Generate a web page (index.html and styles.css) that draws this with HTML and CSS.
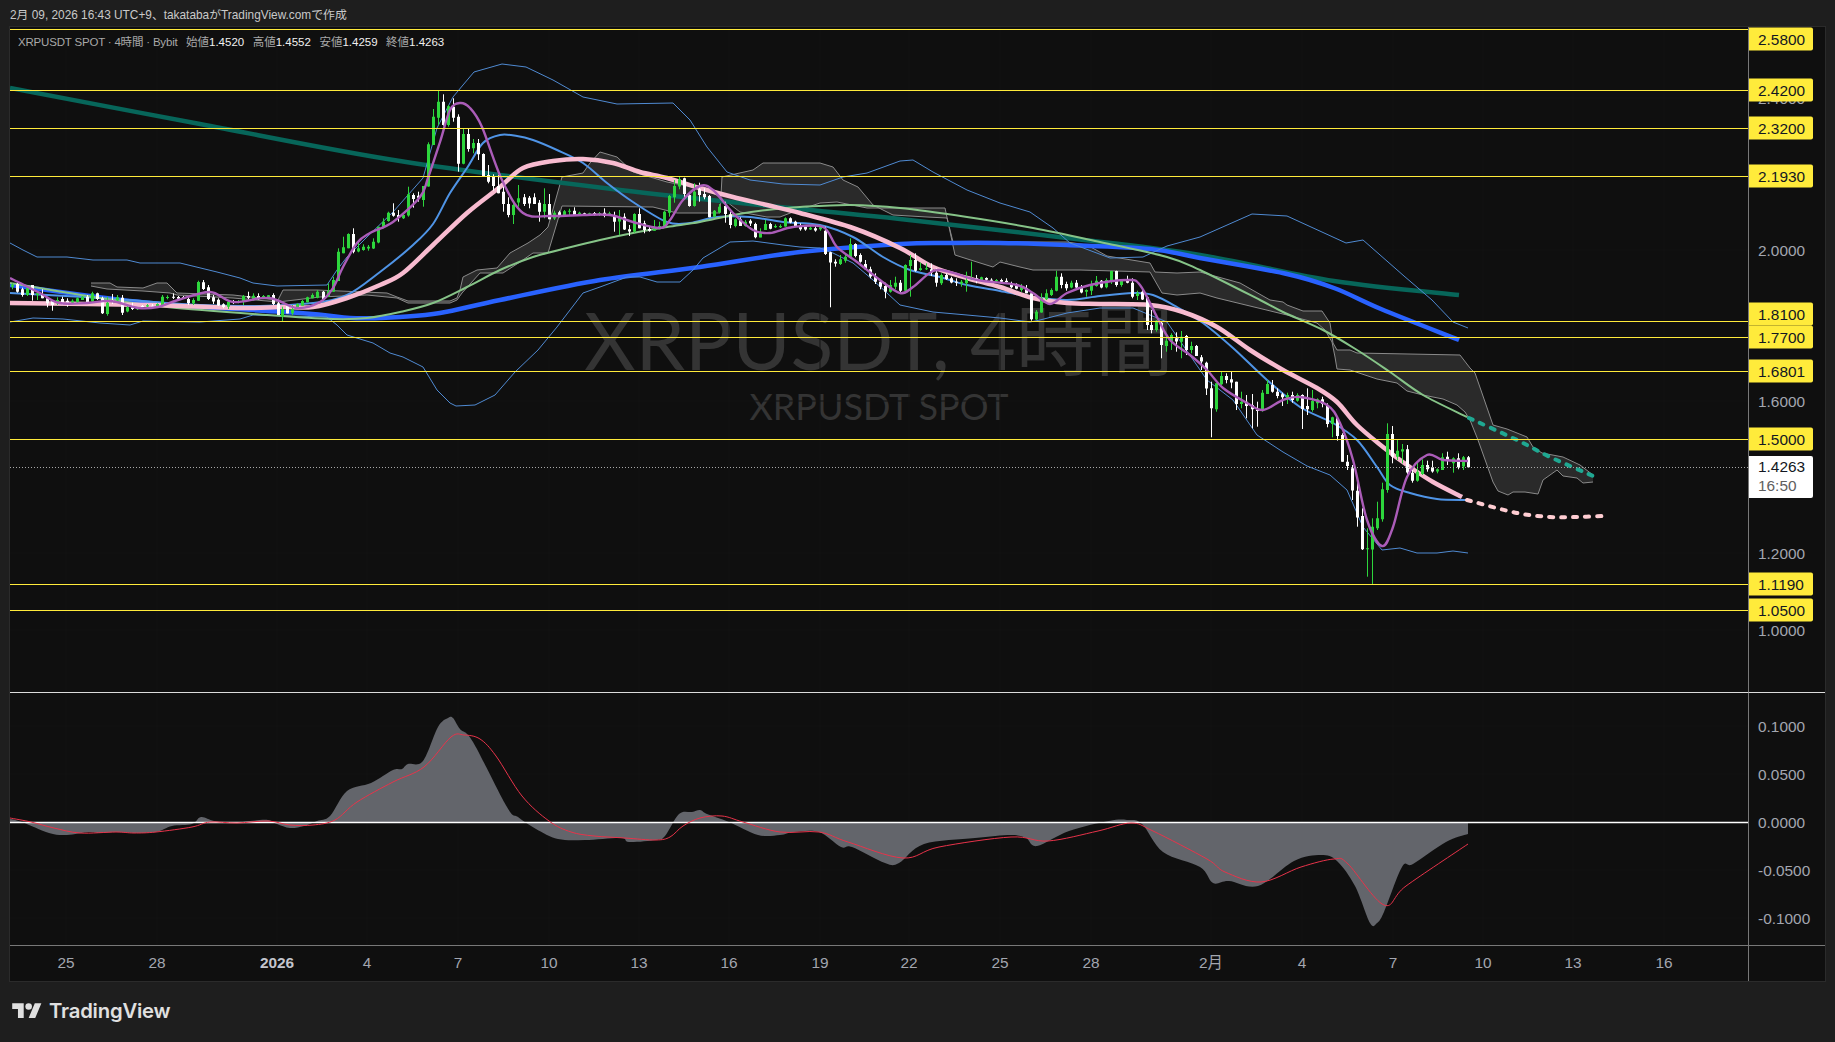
FILE: index.html
```html
<!DOCTYPE html>
<html lang="ja">
<head>
    <meta charset="UTF-8">
    <meta name="viewport" content="width=device-width, initial-scale=1.0">
    <title>XRPUSDT SPOT, 4時間 | TradingView</title>
    <link rel="stylesheet" href="styles.css">
</head>
<body>
    <div class="snapshot-bar">2月 09, 2026 16:43 UTC+9、takatabaがTradingView.comで作成</div>

    <div class="chart-frame">
        <div class="pane main-pane">
            <div class="watermark">
                <div class="watermark-title">XRPUSDT, 4時間</div>
                <div class="watermark-sub">XRPUSDT SPOT</div>
            </div>
            <svg id="priceChart" class="pane-svg" viewBox="10 27 1738 666"></svg>
            <div class="legend">
                <span class="legend-symbol">XRPUSDT SPOT · 4時間 · Bybit</span>
                <span>始値<b>1.4520</b></span>
                <span>高値<b>1.4552</b></span>
                <span>安値<b>1.4259</b></span>
                <span>終値<b>1.4263</b></span>
            </div>
        </div>

        <div class="price-scale main-scale">
            <span class="tick" style="top:71px">2.4000</span>
            <span class="tick" style="top:223px">2.0000</span>
            <span class="tick" style="top:374px">1.6000</span>
            <span class="tick" style="top:526px">1.2000</span>
            <span class="tick" style="top:603px">1.0000</span>
            <span class="level" style="top:11.5px">2.5800</span>
            <span class="level" style="top:63px">2.4200</span>
            <span class="level" style="top:101px">2.3200</span>
            <span class="level" style="top:149px">2.1930</span>
            <span class="level" style="top:287px">1.8100</span>
            <span class="level" style="top:310px">1.7700</span>
            <span class="level" style="top:344px">1.6801</span>
            <span class="level" style="top:412px">1.5000</span>
            <span class="level" style="top:557px">1.1190</span>
            <span class="level" style="top:583px">1.0500</span>
            <span class="last-price" style="top:429px">1.4263<small>16:50</small></span>
        </div>

        <div class="pane macd-pane">
            <svg id="macdChart" class="pane-svg" viewBox="10 694 1738 253"></svg>
        </div>

        <div class="price-scale macd-scale">
            <span class="tick" style="top:33px">0.1000</span>
            <span class="tick" style="top:81px">0.0500</span>
            <span class="tick" style="top:129px">0.0000</span>
            <span class="tick" style="top:177px">-0.0500</span>
            <span class="tick" style="top:225px">-0.1000</span>
        </div>

        <div class="time-axis">
            <span style="left:56px">25</span>
            <span style="left:147px">28</span>
            <span class="year" style="left:267px">2026</span>
            <span style="left:357px">4</span>
            <span style="left:448px">7</span>
            <span style="left:539px">10</span>
            <span style="left:629px">13</span>
            <span style="left:719px">16</span>
            <span style="left:810px">19</span>
            <span style="left:899px">22</span>
            <span style="left:990px">25</span>
            <span style="left:1081px">28</span>
            <span style="left:1201px">2月</span>
            <span style="left:1292px">4</span>
            <span style="left:1383px">7</span>
            <span style="left:1473px">10</span>
            <span style="left:1563px">13</span>
            <span style="left:1654px">16</span>
        </div>
        <div class="axis-corner"></div>
    </div>

    <footer class="brand">
        <svg class="brand-mark" viewBox="0 0 36 28" aria-hidden="true">
            <path d="M14 22H7V11H0V4h14v18zM28 22h-8l7.5-18h8L28 22z"></path>
            <circle cx="20" cy="8" r="4"></circle>
        </svg>
        <span class="brand-name">TradingView</span>
    </footer>

    <script src="chart.js"></script>
</body>
</html>
```

FILE: styles.css
```css
:root {
    --page-bg: #1e1e1e;
    --chart-bg: #0f0f0f;
    --frame: #2b2b2b;
    --axis-line: #787878;
    --tick-text: #a3a6af;
    --level: #ffeb3b;
}

* {
    margin: 0;
    padding: 0;
    box-sizing: border-box;
}

body {
    width: 1835px;
    height: 1042px;
    overflow: hidden;
    background-color: var(--page-bg);
    font-family: "Liberation Sans", "Noto Sans CJK JP", sans-serif;
}

.snapshot-bar {
    height: 26px;
    padding-left: 10px;
    line-height: 30px;
    font-size: 11.85px;
    color: #c9c9c9;
    white-space: nowrap;
}

.chart-frame {
    display: grid;
    grid-template-columns: 1738px 77px;
    grid-template-rows: 666px 253px 35px;
    width: 1817px;
    margin-left: 9px;
    border: 1px solid var(--frame);
    background-color: var(--chart-bg);
}

.pane {
    position: relative;
    overflow: hidden;
}

.main-pane,
.main-scale {
    border-bottom: 1px solid #dcdcdc;
}

.macd-pane,
.macd-scale {
    border-bottom: 1px solid var(--axis-line);
}

.pane-svg {
    display: block;
    position: absolute;
    top: 0;
    left: 0;
    width: 1738px;
}

.main-pane .pane-svg {
    height: 666px;
}

.macd-pane .pane-svg {
    height: 253px;
}

/* watermark sits behind the series */
.watermark {
    position: absolute;
    top: 268px;
    left: 0;
    width: 100%;
    text-align: center;
    color: #343434;
    font-family: Lato, "Noto Sans CJK JP", sans-serif;
    white-space: nowrap;
}

.watermark-title {
    font-size: 79px;
    line-height: 90px;
}

.watermark-sub {
    font-size: 36px;
    line-height: 42px;
}

.legend {
    position: absolute;
    top: 7px;
    left: 8px;
    display: flex;
    gap: 8.5px;
    font-size: 11.5px;
    line-height: 16px;
    color: #a8a8a8;
    white-space: nowrap;
}

.legend-symbol {
    letter-spacing: -0.19px;
}

.legend b {
    color: #f0f0f0;
    font-weight: normal;
}

.price-scale {
    position: relative;
    border-left: 1px solid var(--axis-line);
    font-size: 15.4px;
    overflow: hidden;
}

.tick,
.level,
.last-price {
    position: absolute;
    left: 0;
    padding-left: 9px;
    white-space: nowrap;
}

.tick {
    height: 23px;
    line-height: 23px;
    transform: translateY(-50%);
    color: var(--tick-text);
}

.level {
    width: 64px;
    height: 23px;
    line-height: 23px;
    transform: translateY(-50%);
    border-radius: 0 2px 2px 0;
    background-color: var(--level);
    color: #131722;
}

.last-price {
    width: 64px;
    height: 42px;
    padding-top: 1px;
    line-height: 19px;
    border-radius: 0 2px 2px 0;
    background-color: #fff;
    color: #131722;
}

.last-price small {
    display: block;
    font-size: inherit;
    color: #606060;
}

.time-axis {
    position: relative;
    font-size: 15.4px;
    color: var(--tick-text);
}

.time-axis span {
    position: absolute;
    top: 6px;
    line-height: 22px;
    transform: translateX(-50%);
    white-space: nowrap;
}

.time-axis .year {
    font-weight: bold;
    color: #c3c5cd;
}

.axis-corner {
    border-left: 1px solid var(--axis-line);
}

.brand {
    display: flex;
    align-items: center;
    gap: 7px;
    margin: 16px 0 0 12px;
    color: #e0e0e0;
}

.brand-mark {
    width: 30px;
    height: 23px;
    fill: currentColor;
}

.brand-name {
    font-family: Inter, "Liberation Sans", sans-serif;
    font-size: 20.3px;
    font-weight: 600;
    letter-spacing: -0.2px;
    line-height: 26px;
}
```

FILE: chart.js
```js
const SVG_NS = 'http://www.w3.org/2000/svg';

function pts(str) {
    return str.trim().split(/\s+/).map(p => p.split(',').map(Number));
}

function polyD(points) {
    return 'M' + points.map(p => p.join(' ')).join('L');
}

// Catmull-Rom through the points, so the averages don't look faceted
function smoothD(points) {
    let d = 'M' + points[0].join(' ');
    for (let i = 0; i < points.length - 1; i++) {
        const p0 = points[i - 1] || points[i];
        const p1 = points[i];
        const p2 = points[i + 1];
        const p3 = points[i + 2] || p2;
        const c1x = p1[0] + (p2[0] - p0[0]) / 6;
        const c1y = p1[1] + (p2[1] - p0[1]) / 6;
        const c2x = p2[0] - (p3[0] - p1[0]) / 6;
        const c2y = p2[1] - (p3[1] - p1[1]) / 6;
        d += `C${c1x.toFixed(1)} ${c1y.toFixed(1)} ${c2x.toFixed(1)} ${c2y.toFixed(1)} ${p2[0]} ${p2[1]}`;
    }
    return d;
}

function add(svg, d, attrs) {
    const el = document.createElementNS(SVG_NS, 'path');
    el.setAttribute('d', d);
    el.setAttribute('fill', 'none');
    el.setAttribute('stroke-linejoin', 'round');
    for (const key in attrs) el.setAttribute(key, attrs[key]);
    svg.appendChild(el);
    return el;
}

/* ---------- series data, page coordinates ---------- */

const spanA = pts(`91,283 110,283 117,287 143,288 157,283 167,283 177,293 233,295 278,300 283,290 317,290 387,293 397,297 408,301 450,301
    457,298 460,290 463,277 477,270 497,268 510,253 528,243 540,235 548,227 562,177 583,173 590,163 600,152 617,157 633,172 667,182 693,187
    713,193 727,202 740,212 767,217 780,217 793,212 820,203 837,202 867,208 900,208 945,208 955,255 977,262 993,267 1000,262 1020,267
    1033,270 1080,270 1150,272 1162,293 1177,295 1200,293 1217,298 1287,315 1317,323 1325,330 1332,342 1335,357 1337,369 1350,370 1377,379
    1397,383 1407,391 1423,395 1443,399 1457,405 1465,412 1470,420 1478,440 1493,482 1498,491 1508,495 1513,492 1525,492 1538,494 1543,480
    1550,475 1557,470 1563,476 1577,478 1583,483 1593,482`);

const spanB = pts(`91,286 107,289 143,291 170,293 177,295 233,298 278,302 320,297 367,295 397,298 408,303 450,303 457,300 462,293 480,273
    503,273 520,262 533,253 548,253 562,206 653,207 677,213 720,213 722,177 753,170 763,163 820,163 833,167 843,180 858,187 873,205 893,215
    927,217 947,218 953,242 1067,242 1087,245 1107,256 1150,263 1155,272 1177,273 1200,272 1240,283 1270,300 1283,302 1287,305 1303,311
    1322,311 1330,323 1333,343 1337,350 1350,350 1357,353 1460,355 1470,368 1475,373 1493,425 1507,429 1527,437 1533,447 1542,453 1563,457
    1580,465 1593,475`);

const bbUpper = pts(`10,243 23,250 37,257 67,257 93,260 127,260 140,263 180,263 217,272 240,278 253,283 277,286 327,285 337,270 347,257 367,237
    393,212 423,178 437,128 453,97 463,85 474,72 502,64 526,67 553,80 583,97 617,104 673,103 690,120 707,147 727,172 750,180 783,184 820,185
    843,177 867,173 900,161 913,160 933,172 967,190 1000,203 1030,212 1053,228 1070,243 1110,258 1143,257 1167,246 1200,237 1252,214 1287,216
    1346,243 1363,240 1404,276 1432,300 1453,322 1468,328`);

const bbLower = pts(`10,322 33,318 63,319 100,323 130,325 143,321 200,322 240,319 253,315 327,317 337,325 347,335 373,343 390,353 403,357
    423,367 437,390 450,403 456,406 475,405 495,395 515,372 538,350 557,327 583,293 600,287 627,277 640,277 657,282 680,282 693,270 703,258
    730,242 753,241 783,245 800,247 820,248 833,253 853,263 873,280 887,293 900,305 933,312 967,315 1000,318 1030,322 1040,320 1067,313 1100,308
    1133,308 1167,322 1207,380 1233,400 1257,435 1283,452 1307,466 1330,475 1347,490 1363,527 1382,550 1400,548 1417,553 1437,553 1453,551 1468,553`);

const slowGreen = pts(`10,88 200,124 400,161 620,190 800,209 900,219 1067,238 1200,255 1334,281 1459,295`);

const thickBlue = pts(`10,285 150,303 300,313 350,318 380,318 400,317 440,313 500,300 600,280 700,267 800,252 900,244 950,243 1000,243 1067,245
    1150,249 1200,258 1287,274 1334,288 1381,309 1459,340`);

const pink = pts(`10,303 150,305 240,308 280,307 313,307 347,298 380,285 403,273 433,245 467,213 500,187 523,168 553,161 583,159 613,163 640,172
    667,178 700,188 733,197 767,205 800,213 853,228 900,248 933,267 967,278 1000,287 1033,298 1067,303 1100,304 1150,305 1183,312 1217,327 1250,350
    1283,370 1317,388 1337,402 1357,425 1383,447 1407,465 1433,482 1462,497`);
const pinkDash = pts(`1467,500 1517,513 1550,517 1577,517 1603,516`);

const lightGreen = pts(`10,283 100,298 167,307 267,315 333,319 367,318 400,312 433,303 467,287 500,270 533,257 567,248 600,240 633,233 667,227
    700,222 733,215 767,210 800,207 850,205 900,208 967,217 1033,228 1100,242 1167,257 1200,270 1260,300 1283,312 1323,330 1357,350 1390,372 1423,395 1467,417`);
const tealDash = pts(`1469,418 1517,440 1550,457 1593,476`);

const midBlue = pts(`10,293 100,298 200,305 260,306 313,303 347,295 380,272 413,245 433,224 450,193 467,168 483,143 500,135 517,136 533,140 557,150
    583,163 607,183 633,202 667,222 690,223 717,217 750,217 783,222 820,225 853,237 883,257 910,270 940,277 967,285 1000,291 1033,297 1067,300 1100,296
    1133,293 1153,295 1177,307 1203,323 1233,348 1267,380 1300,407 1333,423 1357,440 1377,467 1390,485 1410,493 1437,499 1467,500`);

const purple = pts(`10,278 24,285 40,293 59,303 87,303 111,301 138,308 158,307 178,300 210,292 233,302 269,298 297,308 320,302 333,288 343,267
    357,243 370,233 393,222 420,197 428,178 440,142 450,110 460,103 470,108 482,127 502,180 523,213 550,216 583,215 610,215 633,222 660,228 670,220
    683,200 700,186 713,190 733,213 753,230 770,233 793,227 823,227 837,247 857,262 880,280 900,293 913,287 933,271 950,272 977,280 1017,285 1033,293
    1050,304 1067,293 1090,285 1127,280 1140,285 1157,317 1170,340 1190,355 1207,370 1223,388 1247,403 1263,410 1283,400 1300,397 1327,405 1340,423
    1353,460 1367,520 1382,546 1393,527 1407,477 1427,455 1443,460 1468,461`);

/* candles read off 3x crops: colour, wick top, body top, body bottom, wick bottom */
const candleRuns = [
    { x0: 11.7, y0: 250, rows: `g 100 104 110 118,w 98 102 125 128,w 113 118 135 140,g 110 113 135 138,w 105 105 135 152,g 125 130 135 150,
        w 118 133 145 145,w 145 145 160 172,w 150 152 165 182,g 142 150 160 165,w 140 147 158 165,w 145 152 158 170,g 148 152 158 162,g 142 145 158 160,
        g 138 140 150 150,w 135 140 158 160,g 125 130 155 158,w 128 130 147 150,w 140 145 190 192,g 140 158 192 197,w 132 150 155 162,g 135 142 152 155,
        w 135 143 188 195,g 168 172 185 187,w 158 172 177 180,g 172 174 178 180,w 165 168 171 172,g 162 166 170 172,w 162 167 170 172,g 160 162 170 172,
        g 135 140 165 165,g 136 141 144 148,w 130 140 143 147,w 138 141 146 150,w 138 141 144 147,w 142 147 160 165,g 145 150 160 165,g 92 96 152 152,
        w 90 97 117 120,w 105 112 147 150,w 135 142 155 162,w 145 149 166 168,w 160 163 171 175,g 153 155 170 177,w 150 155 159 162,g 150 153 158 160,
        g 135 138 155 165,w 125 138 143 148,g 130 137 148 152,w 130 138 148 150,g 135 138 143 147,g 135 136 143 145,w 130 135 162 165,w 155 160 195 195` },
    { x0: 282.3, y0: 85, rows: `g 665 672 695 710,w 660 662 685 685,g 660 672 685 690,g 655 657 668 668,g 645 648 662 662,g 635 637 652 652,g 625 630 640 640,
        g 615 620 638 640,w 618 620 642 642,g 595 618 635 635,g 575 585 620 620,g 490 500 588 588,g 455 487 505 505,g 445 447 490 490,w 430 447 500 505,
        g 468 490 500 502,g 478 485 495 497,g 480 485 490 497,g 460 470 490 492,g 425 425 472 475,g 400 410 428 430,g 380 383 408 410,w 355 383 392 395,
        w 375 390 398 410,g 388 390 400 402,g 305 328 392 395,w 325 330 342 368,w 320 332 338 350,g 303 303 345 365,g 172 178 305 305,g 72 95 180 180,
        g 18 50 98 120,w 28 50 120 122,g 60 64 120 125,w 40 65 98 110,w 88 95 236 260,g 130 147 236 238,w 130 147 192 200,g 162 174 190 205,w 162 174 208 225` },
    { x0: 483.3, y0: 80, rows: `w 220 222 288 290,w 255 285 305 310,w 283 290 318 332,w 285 318 340 340,w 320 335 372 395,w 352 372 405 412,g 360 375 405 432,g 315 355 368 380,
        w 342 352 372 378,w 348 353 370 385,w 340 352 372 372,w 360 368 395 425,g 325 372 395 415,w 342 372 418 418,g 392 398 415 420,w 392 397 408 412,
        g 390 394 407 410,g 386 392 395 405,w 382 392 405 408,g 395 398 402 406,w 398 400 407 408,g 398 400 406 408,w 396 399 402 408,g 396 399 405 408,
        w 385 398 408 412,g 395 400 406 408,w 395 410 425 455,g 390 412 425 465,w 400 410 448 450,w 435 448 455 468,g 400 402 455 458,w 385 402 445 445,
        w 422 430 450 460,w 440 447 452 455,g 420 447 452 452,g 425 438 448 448,g 392 395 440 442,g 345 348 398 410,g 300 318 352 368,g 290 298 320 328,
        w 293 295 342 355,w 340 345 378 380,g 310 335 378 380,w 308 328 345 365,w 325 342 352 358,w 345 348 412 412,g 390 392 410 412,g 372 380 397 400,
        w 365 378 402 428,w 395 403 435 445,g 415 418 438 442,w 412 418 438 438,g 420 425 438 440,w 418 422 430 438,w 428 432 472 475,g 445 458 472 472,
        g 420 432 450 450,w 428 432 446 448,g 433 438 442 444,g 433 438 442 444,g 412 415 440 440,w 412 415 428 430,w 422 425 438 440,w 430 438 448 452,
        w 438 440 448 452,g 440 443 448 450,w 435 445 452 455,g 435 442 448 452` },
    { x0: 825, y0: 130, rows: `w 290 302 372 375,w 365 367 398 532,w 388 395 400 410,g 375 388 402 405,g 375 380 392 398,g 325 342 382 385,w 340 342 378 382,w 370 375 395 398,
        w 390 402 418 420,w 410 418 440 445,w 430 438 455 462,w 450 455 470 478,w 458 468 485 505,g 450 465 485 488,g 440 458 470 478,w 450 458 482 490,
        g 403 405 482 485,g 375 390 408 500,w 370 390 422 425,g 398 415 420 422,g 400 415 418 420,w 400 418 428 438,w 415 428 458 470,g 430 435 460 465,
        w 430 435 447 450,w 440 445 458 460,w 445 455 458 468,g 450 455 460 470,g 425 450 460 485,g 395 445 448 450,w 435 445 450 460,g 440 442 450 452,
        w 442 444 449 452,w 445 449 452 455,g 447 450 454 457,w 446 450 455 458,w 445 452 456 458,w 455 460 472 475,w 460 468 476 478,g 462 468 480 485,
        w 465 474 490 490,w 485 490 568 572,g 540 545 568 570,g 490 505 548 548,g 478 490 508 510,g 475 480 495 498,g 422 440 482 484,w 430 440 465 475,
        w 455 462 475 482,g 452 458 472 475,w 450 458 472 475,w 465 472 488 490,g 478 480 485 500,g 452 465 482 495,g 438 452 468 470,w 450 452 472 475,
        g 445 450 472 475,g 422 423 455 462,w 422 423 465 470,g 450 452 465 470,w 437 450 458 460,w 445 458 500 505,g 482 490 498 510,w 480 485 508 510,w 500 502 585 600` },
    { x0: 1151, y0: 300, rows: `w 30 75 90 100,g 60 62 90 95,w 65 68 135 175,g 105 122 138 155,g 100 105 125 150,w 97 115 125 155,g 93 110 125 175,w 105 108 150 165,
        g 125 138 150 160,w 135 138 168 168,w 165 172 185 210,w 185 188 265 285,w 245 265 325 412,g 250 250 328 335,g 215 228 253 255,w 220 228 240 250,
        w 215 238 248 265,w 245 245 312 330,g 275 305 312 325,w 285 305 318 355,w 282 315 328 385,w 305 330 333 380,g 270 278 328 335,g 240 252 282 282,
        w 240 255 275 278,w 265 275 288 295,w 278 283 292 318,g 278 285 295 312,w 275 285 300 308,g 280 285 302 305,w 283 285 327 387,w 265 318 328 345,
        g 270 303 330 335,g 295 298 310 325,w 290 298 312 322,w 310 318 372 382,g 350 352 372 412,w 352 355 408 422,w 400 405 485 485,w 465 485 498 510,
        w 495 505 572 600,w 547 572 652 680,w 625 648 748 750,g 685 745 748 830,g 655 680 748 852,g 605 655 685 690,g 548 568 658 665,g 370 402 570 578,
        w 378 402 470 490,g 420 452 470 480,g 432 448 455 490,w 435 448 518 522,w 510 518 542 548,g 488 515 542 545,g 478 495 522 525,w 482 495 508 515,
        w 482 502 515 518,g 505 508 515 520,g 460 472 510 510,w 455 470 482 495,g 472 475 490 518,w 460 475 502 508,g 468 472 500 510,w 468 472 502 502` }
];

const levelLines = [29, 90, 128, 176, 321, 337, 371, 439, 584, 610];
const timeTicks = [66, 157, 277, 367, 458, 549, 639, 729, 820, 909, 1000, 1091, 1211, 1302, 1393, 1483, 1573, 1664];
const PITCH = 5.025;

function candlePaths() {
    const out = { g: { wick: '', body: '' }, w: { wick: '', body: '' } };
    candleRuns.forEach(run => {
        run.rows.split(',').forEach((row, i) => {
            const [c, wt, bt, bb, wb] = row.trim().split(' ');
            const x = Math.round(run.x0 + i * PITCH);
            const y = v => (run.y0 + v / 3).toFixed(1);
            const h = Math.max((bb - bt) / 3, 1).toFixed(1);
            out[c].wick += `M${x} ${y(wt)}V${y(wb)}`;
            out[c].body += `M${x - 1.5} ${y(bt)}h3v${h}h-3z`;
        });
    });
    return out;
}

function grid(svg, top, bottom, ys) {
    const v = timeTicks.map(x => `M${x} ${top}V${bottom}`).join('');
    const h = ys.map(y => `M10 ${y}H1748`).join('');
    add(svg, v + h, { stroke: '#131313', 'stroke-width': 1 });
}

/* ---------- main pane ---------- */

const main = document.getElementById('priceChart');
grid(main, 27, 693, [98, 250, 401, 553, 630]);

const spans = spanA.concat(spanB.slice().reverse());
add(main, polyD(spans) + 'Z', { fill: '#2a2a2a', 'fill-rule': 'evenodd' });
add(main, polyD(spanA), { stroke: '#8a8a8a', 'stroke-width': 1 });
add(main, polyD(spanB), { stroke: '#8a8a8a', 'stroke-width': 1 });

add(main, smoothD(slowGreen), { stroke: '#07665a', 'stroke-width': 4.5 });
add(main, smoothD(thickBlue), { stroke: '#2962ff', 'stroke-width': 4.5 });
add(main, polyD(bbUpper), { stroke: '#4f8ad2', 'stroke-width': 1 });
add(main, polyD(bbLower), { stroke: '#4f8ad2', 'stroke-width': 1 });
add(main, smoothD(midBlue), { stroke: '#4f94e6', 'stroke-width': 2 });
add(main, smoothD(lightGreen), { stroke: '#86c488', 'stroke-width': 2 });
add(main, smoothD(pink), { stroke: '#f8bbd0', 'stroke-width': 4.5 });

const candles = candlePaths();
['w', 'g'].forEach(c => {
    const color = c === 'g' ? '#2dd63c' : '#ffffff';
    add(main, candles[c].wick, { stroke: color, 'stroke-width': 1, transform: 'translate(.5 0)' });
    add(main, candles[c].body, { fill: color, transform: 'translate(.5 0)' });
});

add(main, smoothD(purple), { stroke: '#ab5cb8', 'stroke-width': 2.4 });
add(main, smoothD(pinkDash), { stroke: '#ffcdd2', 'stroke-width': 4, 'stroke-dasharray': '4 8', 'stroke-linecap': 'round' });
add(main, smoothD(tealDash), { stroke: '#1fa892', 'stroke-width': 4, 'stroke-dasharray': '4 8', 'stroke-linecap': 'round' });

add(main, levelLines.map(y => `M10 ${y + 0.5}H1748`).join(''), { stroke: '#ffeb3b', 'stroke-width': 1 });
add(main, 'M10 467.5H1748', { stroke: '#a8a8a8', 'stroke-width': 1, 'stroke-dasharray': '1 2' });

/* ---------- MACD pane ---------- */

const macdArea = pts(`10,820 22,823 49,834 67,836 89,833 100,834 116,833 134,834 156,833 172,827 192,825 201,818 214,822 232,824 250,822 268,821 277,825
    290,829 304,827 317,822 330,817 347,792 371,784 393,771 402,770 408,765 423,762 438,728 448,719 453,719 460,730 473,743 507,808 518,818 536,830 558,840
    585,841 621,839 629,843 656,841 665,837 679,815 692,813 700,811 707,815 729,823 758,836 780,836 794,833 819,833 841,848 852,848 885,864 899,864 924,845
    975,839 1011,836 1026,839 1037,847 1069,832 1109,822 1127,821 1142,825 1163,853 1200,868 1213,884 1229,882 1258,887 1294,862 1321,856 1337,862 1355,887
    1370,924 1377,924 1384,913 1402,868 1413,865 1446,843 1468,835`);

const macdSignal = pts(`10,819 31,823 54,829 80,834 116,833 134,834 156,833 192,828 210,823 237,824 268,822 290,826 313,826 335,821 357,803 393,783 424,768
    451,738 464,736 480,740 496,757 522,797 549,822 571,833 594,837 625,839 656,841 670,838 683,827 700,819 722,817 743,823 780,833 819,833 848,843 903,859
    939,848 1011,838 1048,842 1098,832 1131,824 1153,832 1207,860 1225,873 1261,883 1301,868 1334,860 1348,865 1384,906 1406,887 1468,845`);

const macd = document.getElementById('macdChart');
grid(macd, 694, 947, [727, 775, 871, 919]);
add(macd, smoothD(macdArea) + 'L1468 823L10 823Z', { fill: '#63656b' });
add(macd, 'M10 823.5H1748', { stroke: '#ffffff', 'stroke-width': 1.5 });
add(macd, smoothD(macdSignal), { stroke: '#e8334a', 'stroke-width': 1 });
```
